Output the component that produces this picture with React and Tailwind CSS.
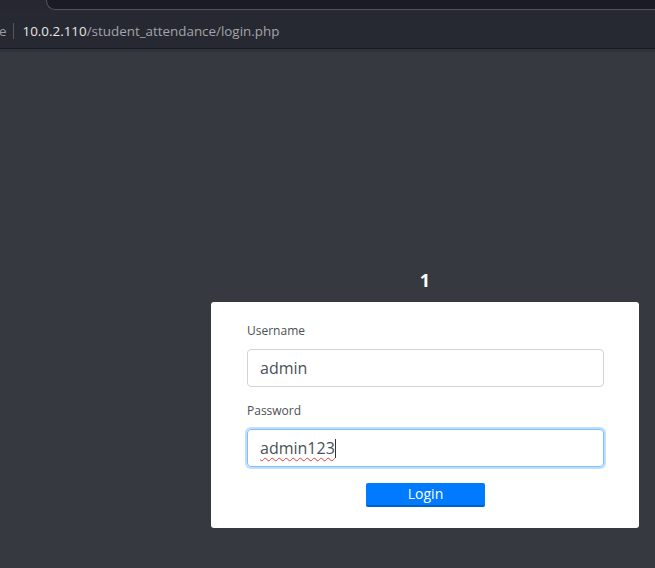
export default function App() {
  return (
    <div className="flex h-[568px] w-[655px] flex-col overflow-hidden bg-[#363a40] font-['Open_Sans',sans-serif]">
      {/* browser chrome */}
      <div className="flex h-[10px] bg-[#26272f]">
        <div className="ml-[46px] flex-1 rounded-bl-[9px] border-b border-l border-[#54555d] bg-[#1b1c23]" />
      </div>
      <div className="flex h-[38px] items-center bg-[#272932] pt-[4px] text-[13.4px]">
        <span className="ml-[-1px] text-[#9a9ba1]">e</span>
        <span className="ml-[6px] h-[16px] w-px bg-[#55565e]" />
        <span className="ml-[9px] text-[#e6e6e8]">10.0.2.110</span>
        <span className="text-[#a3a4a9]">/student_attendance/login.php</span>
      </div>
      <div className="h-[4px] border-t border-[#1a1b21] bg-[#30333a]" />

      <div className="ml-[211px] mt-[219px] flex w-[428px] flex-col items-center">
        <h1 className="text-[18px] font-bold leading-none text-white">1</h1>
        <form className="mt-[13px] flex w-full flex-col rounded-[3px] bg-white pb-[21px] pl-[36px] pr-[35px] pt-[23px]">
          <label className="text-[12px] leading-none text-[#4a4f55]">Username</label>
          <input
            readOnly
            value="admin"
            className="mt-[12px] h-[38px] rounded-[4px] border border-[#ced4da] px-[12px] text-[16px] text-[#495057] outline-none"
          />
          <label className="mt-[18px] text-[12px] leading-none text-[#4a4f55]">Password</label>
          <div className="mt-[12px] flex h-[38px] items-center rounded-[4px] border border-[#80bdff] px-[12px] text-[16px] text-[#495057] shadow-[0_0_0_2px_rgba(0,123,255,0.25)]">
            <span className="underline decoration-[#e03a3a] decoration-wavy decoration-1 underline-offset-[3px]">admin123</span>
            <span className="h-[19px] w-px bg-[#333]" />
          </div>
          <button
            type="button"
            className="mx-auto mt-[16px] h-[24px] w-[119px] rounded-[2px] border-b-2 border-[#0060c8] bg-[#007bff] text-[14px] leading-none text-white"
          >
            Login
          </button>
        </form>
      </div>
    </div>
  )
}
